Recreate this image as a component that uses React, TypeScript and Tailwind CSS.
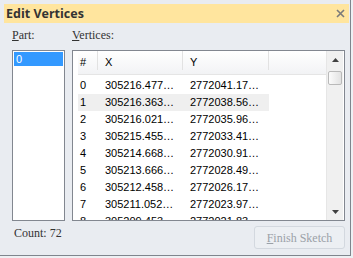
import React from 'react';

const ROWS: [string, string, string][] = [
  ['0', '305216.477…', '2772041.17…'],
  ['1', '305216.363…', '2772038.56…'],
  ['2', '305216.021…', '2772035.96…'],
  ['3', '305215.455…', '2772033.41…'],
  ['4', '305214.668…', '2772030.91…'],
  ['5', '305213.666…', '2772028.49…'],
  ['6', '305212.458…', '2772026.17…'],
  ['7', '305211.052…', '2772023.97…'],
  ['8', '305209.453…', '2772021.83…'],
];

const serif = { fontFamily: '"Liberation Serif", serif' };
const sans = { fontFamily: '"Liberation Sans", Arial, sans-serif' };

const ScrollBar: React.FC = () => (
  <div className="w-[17px] h-full flex flex-col bg-[#f0f0f0] border-l border-[#e6e6e6]">
    <div className="h-[17px] flex items-center justify-center">
      <svg width="7" height="4" viewBox="0 0 7 4">
        <path d="M0 4 L3.5 0 L7 4 Z" fill="#404040" />
      </svg>
    </div>
    <div className="mt-[3px] mx-[1px] h-[14px] rounded-[2px] border border-[#b9b9b9] bg-gradient-to-r from-[#fbfbfb] to-[#e2e2e2]" />
    <div className="flex-1" />
    <div className="h-[17px] flex items-center justify-center">
      <svg width="7" height="4" viewBox="0 0 7 4">
        <path d="M0 0 L3.5 4 L7 0 Z" fill="#404040" />
      </svg>
    </div>
  </div>
);

const App: React.FC = () => (
  <div className="w-[353px] h-[258px] bg-[#eef0f3] overflow-hidden">
    <div className="w-[351px] h-[256px] flex flex-col bg-[#e9ecf1] border-r border-b border-[#7f858d] pt-[4px] pl-[4px] pr-[1px]">
      {/* title bar */}
      <div className="h-[19px] flex items-center justify-between bg-[#ffe59e] pl-[2px] pr-[4px]">
        <span
          className="text-[12.5px] font-bold text-[#333333] leading-[19px]"
          style={{ fontFamily: '"Open Sans", "Noto Sans", sans-serif' }}
        >
          Edit Vertices
        </span>
        <svg width="9" height="9" viewBox="0 0 9 9">
          <path d="M1 1 L8 8 M8 1 L1 8" stroke="#7a7a7a" strokeWidth="1.6" />
        </svg>
      </div>

      <div className="flex flex-col pl-[8px]">
        <div className="flex gap-[7px] pt-[4px]">
          {/* part column */}
          <div className="flex flex-col w-[53px]">
            <div className="text-[12px] leading-[16px] text-[#333] mb-[7px]" style={serif}>
              <span className="underline">P</span>art:
            </div>
            <div className="h-[171px] bg-white border border-[#828790] p-[1px]">
              <div className="h-[14px] bg-[#3399ff] text-white text-[11px] leading-[14px] pl-[2px]" style={sans}>
                0
              </div>
            </div>
          </div>

          {/* vertices column */}
          <div className="flex flex-col w-[273px]">
            <div className="text-[12px] leading-[16px] text-[#333] mb-[7px]" style={serif}>
              <span className="underline">V</span>ertices:
            </div>
            <div className="h-[171px] bg-white border border-[#828790] flex overflow-hidden">
              <div className="flex-1 flex flex-col pl-[5px] overflow-hidden text-[11px] text-black" style={sans}>
                <div className="h-[24px] flex items-end pb-[4px] bg-gradient-to-b from-white to-[#f2f3f5] border-b border-[#e5e5e5] shrink-0">
                  <div className="w-[20px] pl-[2px] border-r border-[#e2e2e2] h-[20px] flex items-end">#</div>
                  <div className="w-[85px] pl-[7px] border-r border-[#e2e2e2] h-[20px] flex items-end">X</div>
                  <div className="w-[86px] pl-[7px] border-r border-[#e2e2e2] h-[20px] flex items-end">Y</div>
                </div>
                <div className="h-[2px] shrink-0" />
                {ROWS.map(([i, x, y]) => (
                  <div key={i} className={`h-[17px] shrink-0 flex items-center w-[191px] ${i === '1' ? 'bg-[#efefef]' : ''}`}>
                    <div className="w-[20px] pl-[2px]">{i}</div>
                    <div className="w-[85px] pl-[7px]">{x}</div>
                    <div className="w-[86px] pl-[7px]">{y}</div>
                  </div>
                ))}
              </div>
              <div className="pr-[1px] h-full">
                <ScrollBar />
              </div>
            </div>
          </div>
        </div>

        <div className="flex justify-between w-[333px] mt-[4px]">
          <div className="pl-[2px] text-[12px] leading-[16px] text-[#333]" style={serif}>
            Count: 72
          </div>
          <div
            className="mt-[1px] w-[91px] h-[23px] rounded-[3px] border border-[#d3d8df] bg-[#eceff3] flex items-center justify-center text-[12px] text-[#9ba1a8]"
            style={serif}
          >
            <span className="underline">F</span>inish Sketch
          </div>
        </div>
      </div>
    </div>
  </div>
);

export default App;
